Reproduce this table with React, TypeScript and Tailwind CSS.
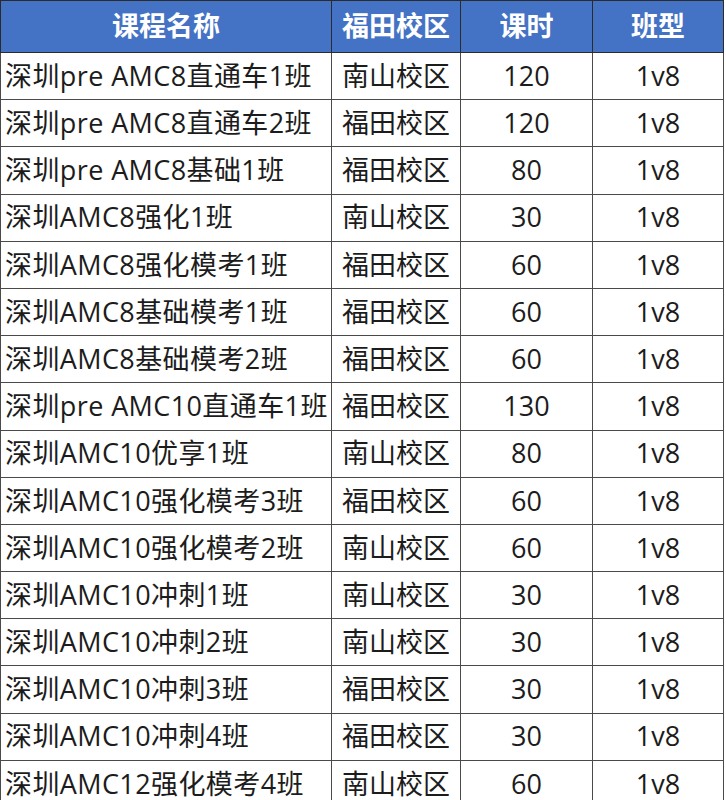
const rows: [string, string, string][] = [
  ["深圳pre AMC8直通车1班", "南山校区", "120"],
  ["深圳pre AMC8直通车2班", "福田校区", "120"],
  ["深圳pre AMC8基础1班", "福田校区", "80"],
  ["深圳AMC8强化1班", "南山校区", "30"],
  ["深圳AMC8强化模考1班", "福田校区", "60"],
  ["深圳AMC8基础模考1班", "福田校区", "60"],
  ["深圳AMC8基础模考2班", "福田校区", "60"],
  ["深圳pre AMC10直通车1班", "福田校区", "130"],
  ["深圳AMC10优享1班", "南山校区", "80"],
  ["深圳AMC10强化模考3班", "福田校区", "60"],
  ["深圳AMC10强化模考2班", "南山校区", "60"],
  ["深圳AMC10冲刺1班", "南山校区", "30"],
  ["深圳AMC10冲刺2班", "南山校区", "30"],
  ["深圳AMC10冲刺3班", "福田校区", "30"],
  ["深圳AMC10冲刺4班", "福田校区", "30"],
  ["深圳AMC12强化模考4班", "南山校区", "60"],
];

const App = () => {
  return (
    <div className="w-[726px] h-[800px] overflow-hidden bg-white font-['Open_Sans','Noto_Sans_CJK_SC',sans-serif] text-[27px] text-[#1c1c1c]">
      <table className="border-collapse table-fixed w-[723px]">
        <colgroup>
          <col className="w-[331px]" />
          <col className="w-[129px]" />
          <col className="w-[132px]" />
          <col className="w-[131px]" />
        </colgroup>
        <thead>
          <tr className="h-[52px] bg-[#4472c4] text-white">
            <th className="border border-[#2b2b2b] text-center font-bold">课程名称</th>
            <th className="border border-[#2b2b2b] text-center font-bold">福田校区</th>
            <th className="border border-[#2b2b2b] text-center font-bold">课时</th>
            <th className="border border-[#2b2b2b] text-center font-bold">班型</th>
          </tr>
        </thead>
        <tbody>
          {rows.map((r, i) => (
            <tr key={i} className="h-[47.2px]">
              <td className="border border-[#4a4a4a] pl-[4px] tracking-[0.4px] whitespace-nowrap">{r[0]}</td>
              <td className="border border-[#4a4a4a] text-center whitespace-nowrap">{r[1]}</td>
              <td className="border border-[#4a4a4a] text-center">{r[2]}</td>
              <td className="border border-[#4a4a4a] text-center">1v8</td>
            </tr>
          ))}
        </tbody>
      </table>
    </div>
  );
};

export default App;
